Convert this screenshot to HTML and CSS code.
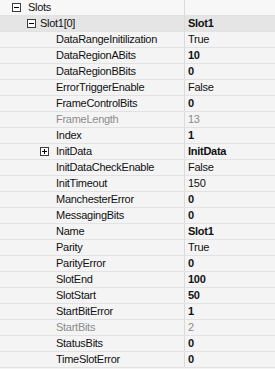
FILE: index.html
```html
<!DOCTYPE html>
<html lang="en">
<head>
  <meta charset="UTF-8">
  <title>Slots</title>
  <link rel="stylesheet" href="styles.css">
</head>
<body>
  <div class="grid">
    <div class="row cat">
      <div class="name lvl0">
        <svg class="box" width="9" height="9"><rect x="0.5" y="0.5" width="8" height="8" fill="#fff" stroke="#3c3c3c"/><path d="M2 4.5h5" stroke="#000"/></svg>
        <span>Slots</span>
      </div>
      <div class="value"></div>
    </div>
    <div class="row selected">
      <div class="name lvl1">
        <svg class="box" width="9" height="9"><rect x="0.5" y="0.5" width="8" height="8" fill="#fff" stroke="#3c3c3c"/><path d="M2 4.5h5" stroke="#000"/></svg>
        <span>Slot1[0]</span>
      </div>
      <div class="value bold">Slot1</div>
    </div>
    <div class="row"><div class="name">DataRangeInitilization</div><div class="value">True</div></div>
    <div class="row"><div class="name">DataRegionABits</div><div class="value bold">10</div></div>
    <div class="row"><div class="name">DataRegionBBits</div><div class="value bold">0</div></div>
    <div class="row"><div class="name">ErrorTriggerEnable</div><div class="value">False</div></div>
    <div class="row"><div class="name">FrameControlBits</div><div class="value bold">0</div></div>
    <div class="row disabled"><div class="name">FrameLength</div><div class="value">13</div></div>
    <div class="row"><div class="name">Index</div><div class="value bold">1</div></div>
    <div class="row">
      <div class="name lvl2">
        <svg class="box" width="9" height="9"><rect x="0.5" y="0.5" width="8" height="8" fill="#fff" stroke="#3c3c3c"/><path d="M2 4.5h5M4.5 2v5" stroke="#000"/></svg>
        <span>InitData</span>
      </div>
      <div class="value bold">InitData</div>
    </div>
    <div class="row"><div class="name">InitDataCheckEnable</div><div class="value">False</div></div>
    <div class="row"><div class="name">InitTimeout</div><div class="value">150</div></div>
    <div class="row"><div class="name">ManchesterError</div><div class="value bold">0</div></div>
    <div class="row"><div class="name">MessagingBits</div><div class="value bold">0</div></div>
    <div class="row"><div class="name">Name</div><div class="value bold">Slot1</div></div>
    <div class="row"><div class="name">Parity</div><div class="value">True</div></div>
    <div class="row"><div class="name">ParityError</div><div class="value bold">0</div></div>
    <div class="row"><div class="name">SlotEnd</div><div class="value bold">100</div></div>
    <div class="row"><div class="name">SlotStart</div><div class="value bold">50</div></div>
    <div class="row"><div class="name">StartBitError</div><div class="value bold">1</div></div>
    <div class="row disabled"><div class="name">StartBits</div><div class="value">2</div></div>
    <div class="row"><div class="name">StatusBits</div><div class="value bold">0</div></div>
    <div class="row"><div class="name">TimeSlotError</div><div class="value bold">0</div></div>
  </div>
</body>
</html>
```

FILE: styles.css
```css
* {
  margin: 0;
  padding: 0;
  box-sizing: border-box;
}

body {
  background-color: #f4f4f4;
  font-family: 'Liberation Sans', Arial, sans-serif;
  font-size: 11px;
  letter-spacing: -0.27px;
  color: #111;
}

.grid {
  width: 275px;
}

.row {
  display: flex;
  height: 16px;
  border-bottom: 1px solid #e2e2e2;
  background-color: #f4f4f4;
}

.row.cat {
  background-color: #f7f7f7;
}

.row.selected {
  background-color: #e5e5e5;
}

.name {
  width: 184px;
  display: flex;
  align-items: center;
  padding-left: 56px;
  white-space: nowrap;
  overflow: hidden;
  line-height: 15px;
}

.name .box {
  flex: none;
  margin-right: 7px;
}

.name.lvl0 {
  padding-left: 12px;
}

.name.lvl1 {
  padding-left: 27px;
}

.name.lvl1 .box {
  margin-right: 4px;
}

.name.lvl2 {
  padding-left: 40px;
}

.value {
  flex: 1;
  border-left: 1px solid #dadada;
  padding-left: 3px;
  line-height: 15px;
  white-space: nowrap;
}

.bold {
  font-weight: bold;
}

.disabled .name,
.disabled .value {
  color: #8c8c8c;
}
```
